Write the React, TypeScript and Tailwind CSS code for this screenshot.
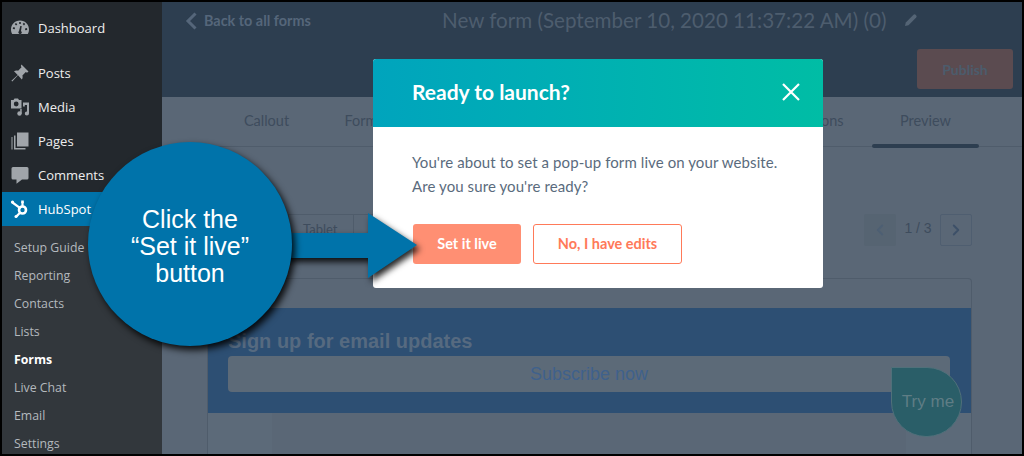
import React from 'react';
import { ChevronLeft, ChevronRight } from 'lucide-react';

const wpFont = { fontFamily: '"Open Sans", "Noto Sans", sans-serif' };
const hsFont = { fontFamily: 'Lato, "Open Sans", sans-serif' };
const arial = { fontFamily: '"Liberation Sans", Arial, sans-serif' };

const DashIcon = () => (
  <svg viewBox="0 0 20 20" className="w-5 h-5 fill-[#a0a5aa]">
    <path fillRule="evenodd" d="M10 2.500C4.700 2.500 1 6.600 1 11.600c0 1.700.5 3.200 1.200 4.400h15.600c.7-1.200 1.200-2.700 1.200-4.400 0-5-3.700-9.100-9-9.100zM9.200 4h1.600v2H9.200V4zM4.700 6l1.400-1.100 1.200 1.600L6 7.600 4.700 6zm8-.1 1.200-1.100L15.200 6 14 7.400l-1.300-1.500zM2.800 11l.2-1.800 2 .3-.2 1.800-2-.3zm12.200-.6 2-.3.2 1.800-2 .3-.2-1.800zM11.700 8l-.7 5a1.700 1.700 0 1 1-2 .1L10.300 8h1.400z" />
  </svg>
);
const PinIcon = () => (
  <svg viewBox="0 0 20 20" className="w-5 h-5 fill-[#a0a5aa]">
    <path d="M11.500 1.500l7 7-1.500 1.200-1.200-.7-3.400 3.400c.5 1.500.2 3-.6 4.100L8 12.300 2.300 18.600l-.9-.9L7.700 12 4 8.300c1.100-.8 2.600-1.100 4.100-.6l3.400-3.400-.7-1.200.7-1.600z" />
  </svg>
);
const MediaIcon = () => (
  <svg viewBox="0 0 20 20" className="w-5 h-5 fill-[#a0a5aa]">
    <path fillRule="evenodd" d="M4.500 1.500h3.500l1 1.500h2.500v8.500H1V3h2.500l1-1.500zM6.200 4.600a2.400 2.400 0 1 0 0 4.800 2.400 2.400 0 0 0 0-4.800z" />
    <path d="M13 5.500h6v11a2.100 2.100 0 1 1-2-2.100V8h-2.200v1.500H13V5.500z" />
    <circle cx="9.500" cy="16.500" r="2.200" />
    <rect x="10.200" y="12" width="1.500" height="4.500" />
  </svg>
);
const PagesIcon = () => (
  <svg viewBox="0 0 20 20" className="w-5 h-5 fill-[#a0a5aa]">
    <path d="M7 1.500h11.500v14H7z" />
    <path d="M5.500 4.500v12.500h10v1.500H4V4.500h1.500z" />
    <path d="M2.500 6v12.500h-1V6h1z" />
  </svg>
);
const CommentIcon = () => (
  <svg viewBox="0 0 20 20" className="w-5 h-5 fill-[#a0a5aa]">
    <path d="M3 2h14a1.500 1.500 0 0 1 1.500 1.500v9.500A1.500 1.500 0 0 1 17 14.500h-5L6.500 18.800V14.500H3A1.500 1.500 0 0 1 1.500 13V3.500A1.500 1.500 0 0 1 3 2z" />
  </svg>
);
const HubSpotIcon = () => (
  <svg viewBox="0 0 20 20" className="w-5 h-5" fill="none" stroke="#fff">
    <circle cx="12.500" cy="11" r="3.500" strokeWidth="2.600" />
    <path d="M12.500 7V3.500M9.800 8.800 2.500 3.500M10 13.800l-3.300 3.300" strokeWidth="2.200" strokeLinecap="round" />
    <circle cx="2.500" cy="3" r="1.600" fill="#fff" stroke="none" />
    <circle cx="6" cy="17.500" r="1.500" fill="#fff" stroke="none" />
    <rect x="11.200" y="1.500" width="2.600" height="2.600" fill="#fff" stroke="none" />
  </svg>
);

const topItems = [
  { label: 'Posts', icon: <PinIcon /> },
  { label: 'Media', icon: <MediaIcon /> },
  { label: 'Pages', icon: <PagesIcon /> },
  { label: 'Comments', icon: <CommentIcon /> },
];
const subItems = ['Setup Guide', 'Reporting', 'Contacts', 'Lists', 'Forms', 'Live Chat', 'Email', 'Settings'];

const Sidebar = () => (
  <aside style={wpFont} className="w-[160px] shrink-0 bg-[#23282d] text-[13px] text-[#eeeeee] flex flex-col overflow-hidden">
    <div className="h-[34px] mt-[9px] shrink-0 flex items-center pl-[8px] gap-[8px]">
      <DashIcon />
      <span className="pt-[2px]">Dashboard</span>
    </div>
    <div className="mt-[11px] shrink-0">
      {topItems.map(item => (
        <div key={item.label} className="h-[34px] flex items-center pl-[8px] gap-[8px]">
          {item.icon}
          <span className="pt-[2px]">{item.label}</span>
        </div>
      ))}
    </div>
    <div className="h-[34px] shrink-0 flex items-center pl-[8px] gap-[8px] bg-[#0073aa] text-white">
      <HubSpotIcon />
      <span className="pt-[2px]">HubSpot</span>
    </div>
    <div className="flex-1 shrink-0 bg-[#32373c] pt-[8px] pl-[12px] text-[12.300px] text-[#b4b9be]">
      {subItems.map(s => (
        <div key={s} className={`h-[28px] flex items-center ${s === 'Forms' ? 'font-bold text-white' : ''}`}>{s}</div>
      ))}
    </div>
  </aside>
);

const Header = () => (
  <header className="h-[95px] shrink-0 bg-[#2d3e50]">
    <div style={hsFont} className="flex items-start">
      <div className="flex items-center w-[280px] pl-[23px] pt-[8px] text-[#55667a] font-bold text-[14.400px]">
        <svg viewBox="0 0 12 18" className="w-[12px] h-[18px] mr-[7px]" fill="none" stroke="#55667a" strokeWidth="3">
          <path d="M10.500 1.500 3 9l7.500 7.500" />
        </svg>
        <span>Back to all forms</span>
      </div>
      <div className="flex items-center text-[#4d5d6e] text-[20.600px] leading-[26px] pt-[5px] whitespace-nowrap">
        <span>New form (September 10, 2020 11:37:22 AM) (0)</span>
        <svg viewBox="0 0 14 14" className="w-[14px] h-[14px] ml-[18px] fill-[#546475]">
          <path d="M1 13l.8-3.500L9.500 1.800a1.500 1.500 0 0 1 2.100 0l.6.600a1.500 1.500 0 0 1 0 2.100L4.500 12.200 1 13z" />
        </svg>
      </div>
    </div>
    <div className="flex justify-end pr-[9px] mt-[16px]">
      <button style={hsFont} className="w-[96px] h-[40px] rounded-[3px] bg-[#5b4b50] text-[#4c5c6c] font-bold text-[14px]">Publish</button>
    </div>
  </header>
);

const Tabs = () => (
  <nav style={hsFont} className="h-[50px] shrink-0 flex border-b border-[#4f5c6b] text-[14.500px] text-[#3e4c5d] pl-[51px] pr-[43px] pb-[2px]">
    <div className="w-[107px] flex items-center justify-center">Callout</div>
    <div className="w-[82px] flex items-center justify-center">Form</div>
    <div className="flex-1" />
    <div className="w-[108px] flex items-center justify-center">Options</div>
    <div className="w-[107px] flex items-center justify-center relative">
      Preview
      <span className="absolute left-0 right-0 bottom-[-4px] h-[4px] rounded-[2px] bg-[#2d3e50]" />
    </div>
  </nav>
);

const Toolbar = () => (
  <div className="flex justify-between items-start h-[32px] pl-[126px] pr-[50px]">
    <div style={hsFont} className="flex h-[32px] text-[13px] text-[#3e4c5d]">
      <div className="w-[65px] h-[32px] border border-[#4f5c6b] border-r-0 flex items-center pl-[14px]">Tablet</div>
      <div className="w-[50px] h-[32px] border border-[#4f5c6b]" />
    </div>
    <div className="flex items-center">
      <div className="w-[32px] h-[32px] rounded-[2px] bg-[#566472] flex items-center justify-center">
        <ChevronLeft className="w-[18px] h-[18px] text-[#4d5f73]" strokeWidth={2.500} />
      </div>
      <span style={arial} className="w-[44px] pb-[3px] text-center text-[14px] text-[#3e4c5d]">1 / 3</span>
      <div className="w-[32px] h-[32px] rounded-[2px] border border-[#4f5e70] flex items-center justify-center">
        <ChevronRight className="w-[18px] h-[18px] text-[#3d5068]" strokeWidth={2.500} />
      </div>
    </div>
  </div>
);

const PreviewCard = () => (
  <div className="mt-[32px] ml-[45px] mr-[50px] flex-1 border border-b-0 border-[#4f5c6b] rounded-t-[4px] flex flex-col overflow-hidden">
    <div className="h-[29px] shrink-0" />
    <div style={arial} className="h-[105px] shrink-0 bg-[#2d4f73] pl-[20px] pr-[21px] pt-[21px]">
      <div className="text-[20px] leading-[24px] font-bold text-[#566a80]">Sign up for email updates</div>
      <div className="mt-[3px] h-[36px] rounded-[4px] bg-[#5c6a78] flex items-center justify-center text-[18px] text-[#3f618c]">Subscribe now</div>
    </div>
    <div className="flex-1 flex">
      <div className="w-[64px] bg-[#5c6a79]" />
      <div className="flex-1" />
      <div className="w-[65px] bg-[#5c6a79]" />
    </div>
  </div>
);

const Callout = () => (
  <>
    <svg className="absolute left-[270px] top-[205px] w-[160px] h-[85px] drop-shadow-[3px_4px_3px_rgba(0,0,0,0.85)]" viewBox="0 0 160 85">
      <path d="M0 28H98V8L147 40L98 73V53H0Z" fill="#0073aa" />
    </svg>
    <div style={arial} className="absolute left-[88px] top-[142px] w-[204px] h-[204px] rounded-full bg-[#0073aa] shadow-[3px_4px_7px_rgba(0,0,0,0.9)] flex items-center justify-center text-center text-white text-[25px] leading-[27px] pt-[4px]">
      <div>Click the<br />“Set it live”<br />button</div>
    </div>
  </>
);

const Modal = () => (
  <div style={hsFont} className="absolute left-[373px] top-[59px] w-[450px] h-[229px] rounded-[3px] bg-white overflow-hidden flex flex-col">
    <div className="h-[68px] shrink-0 bg-gradient-to-r from-[#00a4bd] to-[#00bda5] flex items-center justify-between pl-[39px] pr-[23px] pb-[2px]">
      <span className="text-white font-bold text-[21px]">Ready to launch?</span>
      <svg viewBox="0 0 18 18" className="w-[18px] h-[18px]" fill="none" stroke="#fff" strokeWidth="2.200">
        <path d="M1 1l16 16M17 1 1 17" />
      </svg>
    </div>
    <div className="pl-[39px] pt-[23px] text-[15px] leading-[24px] text-[#5a6b7d] tracking-[0.09px]">
      <p>You're about to set a pop-up form live on your website.</p>
      <p>Are you sure you're ready?</p>
    </div>
    <div className="pl-[40px] pt-[26px] flex gap-[12px] text-[14.500px] font-bold">
      <button className="w-[108px] h-[40px] rounded-[3px] bg-[#ff8f73] text-white">Set it live</button>
      <button className="w-[149px] h-[40px] rounded-[3px] border border-[#ff7a59] text-[#ff7a59]">No, I have edits</button>
    </div>
  </div>
);

const TryMe = () => (
  <div style={arial} className="absolute left-[891px] top-[367px] w-[71px] h-[70px] rounded-full rounded-tl-none bg-[#2a5e68] border border-[#50707a] flex items-center justify-center text-[17px] text-[#5f7d85] pl-[3px] pb-[1px]">
    Try me
  </div>
);

export default function App() {
  return (
    <div className="relative w-[1024px] h-[456px] overflow-hidden border-2 border-black box-border flex bg-black">
      <Sidebar />
      <main className="flex-1 flex flex-col bg-[#5a6776]">
        <Header />
        <Tabs />
        <div className="h-[67px] shrink-0" />
        <Toolbar />
        <PreviewCard />
      </main>
      <div className="absolute -left-[2px] -top-[2px] w-[1024px] h-[456px]">
        <Modal />
        <TryMe />
        <Callout />
      </div>
    </div>
  );
}
